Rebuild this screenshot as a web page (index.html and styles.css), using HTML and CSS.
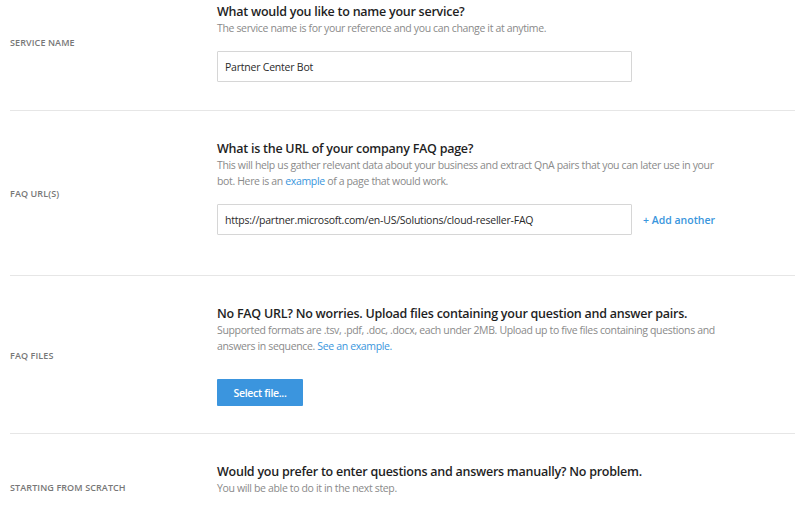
FILE: index.html
```html
<!DOCTYPE html>
<html lang="en">
<head>
<meta charset="utf-8">
<title>Create service</title>
<link rel="stylesheet" href="styles.css">
</head>
<body>
<main class="form">
  <section class="row row--first">
    <div class="label">SERVICE NAME</div>
    <div class="content">
      <h2 class="title">What would you like to name your service?</h2>
      <p class="desc">The service name is for your reference and you can change it at anytime.</p>
      <div class="field-row">
        <input class="input" type="text" value="Partner Center Bot">
      </div>
    </div>
  </section>
  <section class="row">
    <div class="label">FAQ URL(S)</div>
    <div class="content">
      <h2 class="title">What is the URL of your company FAQ page?</h2>
      <p class="desc">This will help us gather relevant data about your business and extract QnA pairs that you can later use in your bot. Here is an <a href="#" class="link">example</a> of a page that would work.</p>
      <div class="field-row field-row--url">
        <input class="input" type="text" value="https://partner.microsoft.com/en-US/Solutions/cloud-reseller-FAQ">
        <a href="#" class="add">+ Add another</a>
      </div>
    </div>
  </section>
  <section class="row">
    <div class="label">FAQ FILES</div>
    <div class="content">
      <h2 class="title">No FAQ URL? No worries. Upload files containing your question and answer pairs.</h2>
      <p class="desc">Supported formats are .tsv, .pdf, .doc, .docx, each under 2MB. Upload up to five files containing questions and answers in sequence. <a href="#" class="link">See an example.</a></p>
      <div class="button-row">
        <button class="button" type="button">Select file...</button>
      </div>
    </div>
  </section>
  <section class="row row--last">
    <div class="label label--last">STARTING FROM SCRATCH</div>
    <div class="content">
      <h2 class="title">Would you prefer to enter questions and answers manually? No problem.</h2>
      <p class="desc">You will be able to do it in the next step.</p>
    </div>
  </section>
</main>
</body>
</html>
```

FILE: styles.css
```css
html, body {
  margin: 0;
  padding: 0;
  background: #ffffff;
  overflow: hidden;
}
body {
  font-family: "Open Sans", "Noto Sans", sans-serif;
  color: #222222;
}
.form {
  padding: 0 5px 0 10px;
}
.row {
  display: flex;
  align-items: center;
  border-bottom: 1px solid #e6e6e6;
  padding: 29px 0 27px 0;
}
.row--first {
  padding-top: 3px;
  padding-bottom: 28px;
}
.row--last {
  border-bottom: none;
  padding-bottom: 40px;
}
.label {
  width: 207px;
  flex: none;
  font-size: 9px;
  line-height: 14px;
  font-weight: 600;
  color: #777777;
  letter-spacing: 0.1px;
}
.label--last {
  padding-top: 17px;
}
.content {
  flex: 1;
  min-width: 0;
}
.title {
  margin: 0;
  font-size: 12.5px;
  line-height: 17px;
  font-weight: 600;
  letter-spacing: -0.25px;
  color: #1f1f1f;
}
.desc {
  margin: 0;
  width: 505px;
  font-size: 10.5px;
  line-height: 16px;
  letter-spacing: -0.35px;
  color: #8a8a8a;
}
.link {
  color: #3a96dd;
  text-decoration: none;
}
.field-row {
  display: flex;
  align-items: center;
  gap: 11px;
  margin-top: 15px;
}
.field-row--url {
  margin-bottom: 13px;
}
.input {
  box-sizing: border-box;
  width: 415px;
  height: 31px;
  border: 1px solid #d6d6d6;
  border-radius: 1px;
  padding: 0 7px;
  font-family: inherit;
  font-size: 10.5px;
  letter-spacing: -0.22px;
  color: #2a2a2a;
  background: #ffffff;
}
.add {
  font-size: 10.5px;
  font-weight: 600;
  color: #3a96dd;
  text-decoration: none;
}
.button-row {
  margin-top: 25px;
}
.button {
  width: 86px;
  height: 27px;
  border: none;
  border-radius: 1px;
  background: #3b95de;
  color: #ffffff;
  font-family: inherit;
  font-size: 10.5px;
  font-weight: 600;
  letter-spacing: -0.3px;
  padding: 0;
}
```
